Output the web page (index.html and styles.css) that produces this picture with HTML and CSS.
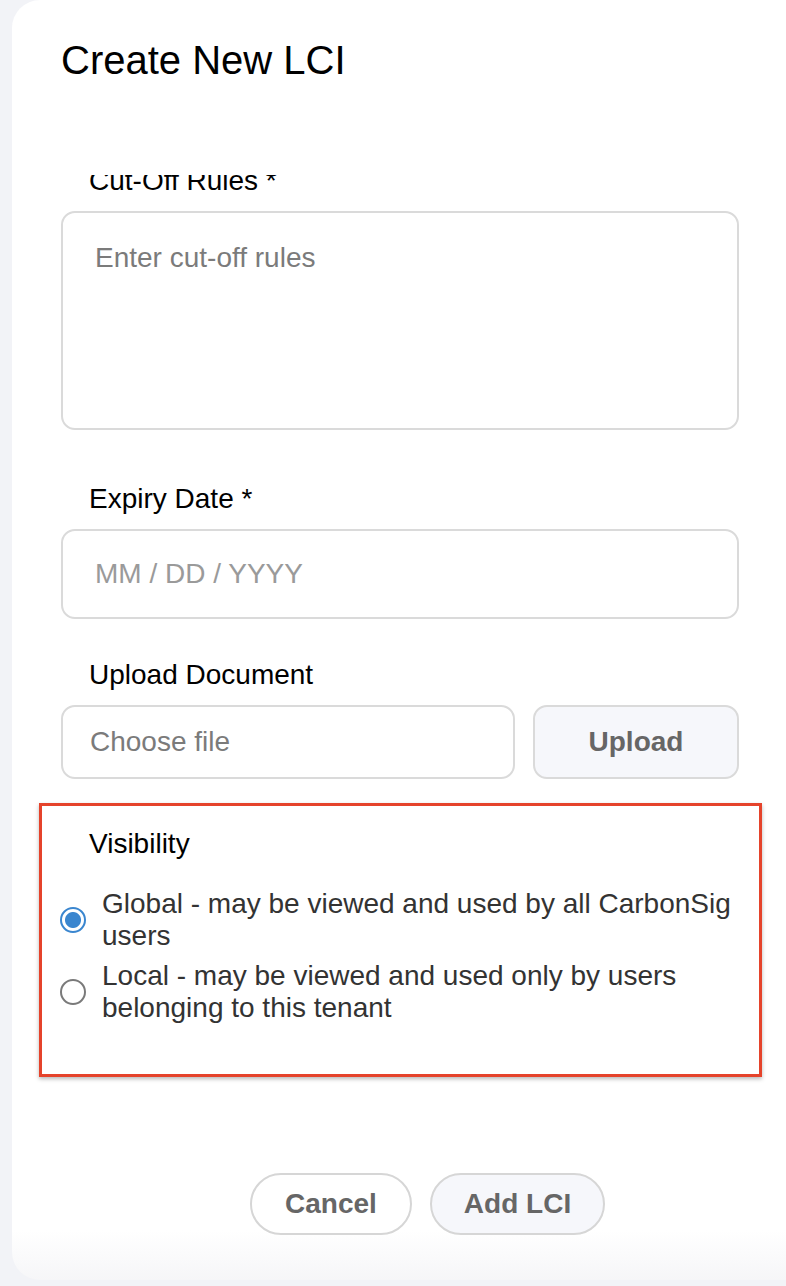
FILE: index.html
```html
<!DOCTYPE html>
<html lang="en">
<head>
<meta charset="utf-8">
<title>Create New LCI</title>
<link rel="stylesheet" href="styles.css">
</head>
<body>
<div class="card">
  <h1 class="title">Create New LCI</h1>
  <div class="scroll">
    <form class="form">
      <div class="field field-cutoff">
        <label class="label">Cut-Off Rules *</label>
        <textarea class="textarea" placeholder="Enter cut-off rules"></textarea>
      </div>
      <div class="field field-expiry">
        <label class="label">Expiry Date *</label>
        <input class="input input-date" type="text" placeholder="MM / DD / YYYY">
      </div>
      <div class="field field-upload">
        <label class="label">Upload Document</label>
        <div class="upload-row">
          <input class="input input-file" type="text" placeholder="Choose file">
          <button type="button" class="btn-upload">Upload</button>
        </div>
      </div>
      <div class="visibility">
        <div class="vis-label">Visibility</div>
        <label class="radio-row">
          <input type="radio" name="vis" class="radio" checked>
          <span class="radio-text">Global - may be viewed and used by all CarbonSig users</span>
        </label>
        <label class="radio-row">
          <input type="radio" name="vis" class="radio">
          <span class="radio-text">Local - may be viewed and used only by users belonging to this tenant</span>
        </label>
      </div>
    </form>
  </div>
  <div class="footer">
    <button type="button" class="btn btn-cancel">Cancel</button>
    <button type="button" class="btn btn-add">Add LCI</button>
  </div>
</div>
</body>
</html>
```
FILE: styles.css
```css
* { box-sizing: border-box; }

html, body {
  margin: 0;
  padding: 0;
}

body {
  background: #f2f3f7;
  font-family: "Liberation Sans", Arial, Helvetica, sans-serif;
  height: 1286px;
  overflow: hidden;
}

.card {
  margin-left: 12px;
  height: 1280px;
  background: linear-gradient(to bottom, #ffffff 0, #ffffff 1230px, #f6f6f8 1280px);
  border-radius: 28px 0 0 28px;
  padding-top: 36px;
  display: flex;
  flex-direction: column;
}

.title {
  margin: 0;
  padding-left: 49px;
  font-size: 40px;
  line-height: 48px;
  font-weight: 400;
  color: #000;
}

.scroll {
  margin-top: 91px;
  height: 966px;
  overflow: hidden;
}

.form {
  margin: -10px 0 0 0;
  padding-left: 49px;
  width: 727px;
}

.label {
  display: block;
  padding-left: 28px;
  font-size: 28px;
  line-height: 32px;
  color: #000;
  margin-bottom: 14px;
}

.field-expiry { margin-top: 53px; }
.field-upload { margin-top: 40px; }

.textarea,
.input {
  display: block;
  width: 678px;
  border: 2px solid #dadada;
  border-radius: 14px;
  background: #fff;
  font-family: "Liberation Sans", Arial, Helvetica, sans-serif;
  font-size: 28px;
  line-height: 32px;
  color: #333;
  outline: none;
  margin: 0;
}

.textarea {
  height: 219px;
  padding: 29px 32px;
  resize: none;
}

.textarea::placeholder { color: #7b7b7b; }

.input-date {
  height: 90px;
  padding: 0 32px;
}

.input-date::placeholder { color: #9a9a9a; }

.upload-row {
  display: flex;
  gap: 18px;
}

.input-file {
  width: 454px;
  height: 74px;
  padding: 0 27px;
}

.input-file::placeholder { color: #7b7b7b; }

.btn-upload {
  width: 206px;
  height: 74px;
  border: 2px solid #dadada;
  border-radius: 14px;
  background: #f6f7fb;
  font-family: "Liberation Sans", Arial, Helvetica, sans-serif;
  font-size: 28px;
  font-weight: 700;
  color: #666;
  padding: 0;
}

.visibility {
  margin: 24px -23px 0 -22px;
  border: 3px solid #e5432b;
  box-shadow: 0 2px 4px rgba(0, 0, 0, 0.28);
  padding: 22px 0 50px 18px;
  display: flex;
  flex-direction: column;
  gap: 8px;
}

.vis-label {
  padding-left: 29px;
  font-size: 28px;
  line-height: 32px;
  color: #000;
  margin-bottom: 20px;
}

.radio-row {
  display: flex;
  align-items: center;
  gap: 16px;
}

.radio {
  -webkit-appearance: none;
  appearance: none;
  flex: 0 0 auto;
  width: 26px;
  height: 26px;
  margin: 0;
  border: 2px solid #7a7a7a;
  border-radius: 50%;
  background: #fff;
}

.radio:checked {
  border-color: #3a86cf;
  background: radial-gradient(circle, #3a86cf 0, #3a86cf 7.5px, #fff 8.5px);
}

.radio-text {
  font-size: 28px;
  line-height: 32px;
  color: #333;
  max-width: 640px;
}

.footer {
  padding: 32px 0 0 238px;
  display: flex;
  gap: 18px;
}

.btn {
  height: 62px;
  border: 2px solid #d6d6d6;
  border-radius: 31px;
  font-family: "Liberation Sans", Arial, Helvetica, sans-serif;
  font-size: 28px;
  font-weight: 700;
  color: #666;
  padding: 0;
}

.btn-cancel {
  width: 162px;
  background: #fff;
}

.btn-add {
  width: 175px;
  background: #f6f7fb;
}
```
